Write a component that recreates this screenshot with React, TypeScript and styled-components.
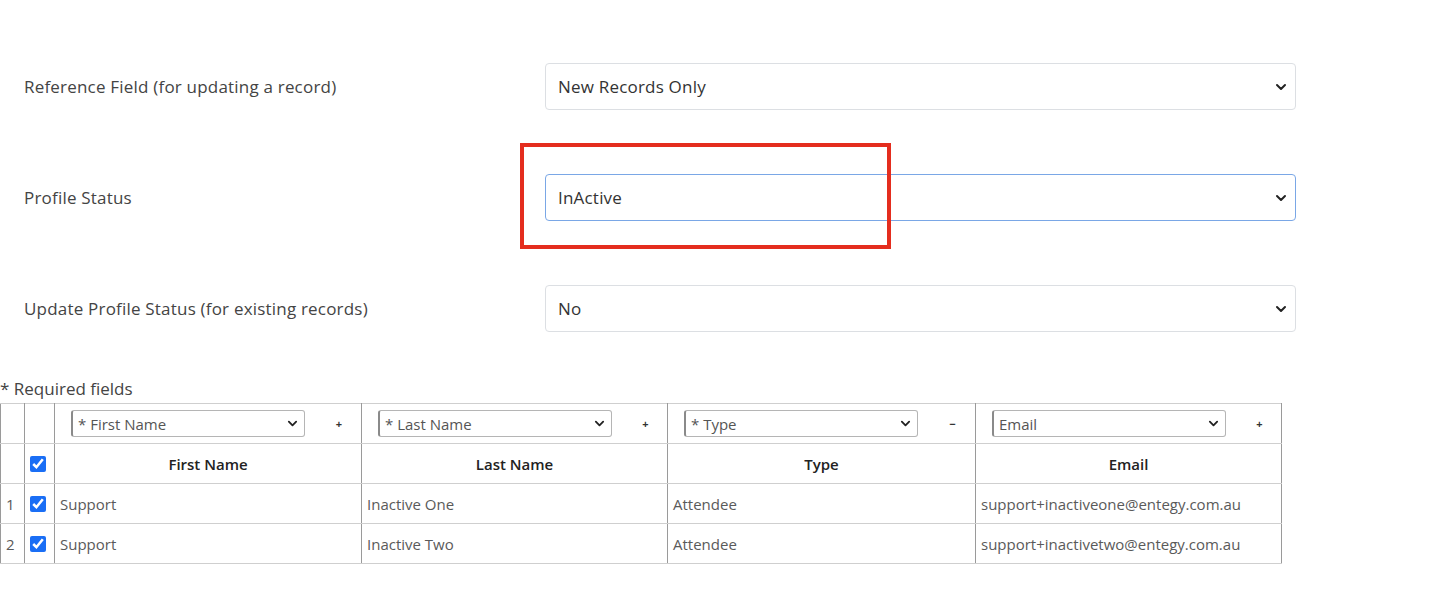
import React from "react";
import styled, { createGlobalStyle } from "styled-components";

const Global = createGlobalStyle`
  html, body { margin: 0; padding: 0; background: #fff; }
  body { font-family: "Open Sans", "Noto Sans", sans-serif; color: #444; }
  * { box-sizing: border-box; }
`;

const Page = styled.div`
  width: 1456px;
  height: 616px;
  padding-top: 63px;
`;

const Form = styled.div`
  display: flex;
  flex-direction: column;
  gap: 64px;
  padding-left: 24px;
  width: 1296px;
`;

const FormRow = styled.div`
  display: grid;
  grid-template-columns: 521px 751px;
  align-items: center;
`;

const Label = styled.div`
  font-size: 17px;
  letter-spacing: 0.2px;
  color: #444;
`;

const SelectWrap = styled.div`
  position: relative;
`;

const Select = styled.div<{ $focused?: boolean }>`
  height: 47px;
  display: flex;
  align-items: center;
  justify-content: space-between;
  padding: 0 8px 0 12px;
  border: 1px solid ${(p) => (p.$focused ? "#7aa7e6" : "#dcdfe3")};
  border-radius: 4px;
  font-size: 17px;
  letter-spacing: 0.2px;
  color: #333;
  background: #fff;
`;

const Highlight = styled.div`
  position: absolute;
  left: -25px;
  top: -31px;
  width: 371px;
  height: 106px;
  border: 4px solid #e42d1e;
  pointer-events: none;
`;

const Chevron = ({ size = 12 }: { size?: number }) => (
  <svg width={size} height={size} viewBox="0 0 12 12" fill="none">
    <path d="M2 4 L6 8 L10 4" stroke="#222" strokeWidth="2" strokeLinecap="round" strokeLinejoin="round" />
  </svg>
);

const Required = styled.div`
  margin-top: 46px;
  font-size: 17px;
  line-height: 22px;
  color: #444;
`;

const Table = styled.table`
  margin-top: 3px;
  border-collapse: collapse;
  width: 1281px;
  table-layout: fixed;
  font-size: 15px;
  color: #5a5a5a;
  border: 1px solid #8c8c8c;
`;

const Cell = styled.td<{ $center?: boolean }>`
  height: 40px;
  border-top: 1px solid #cfcfcf;
  border-bottom: 1px solid #cfcfcf;
  border-left: 1px solid #9a9a9a;
  border-right: 1px solid #9a9a9a;
  padding: 0 5px;
  text-align: ${(p) => (p.$center ? "center" : "left")};
  vertical-align: middle;
  white-space: nowrap;
  overflow: hidden;
`;

const NumCell = styled(Cell)`
  padding: 0 0 0 5px;
`;

const HeadCell = styled(Cell)`
  font-weight: 600;
  color: #222;
  text-align: center;
`;

const PickerCell = styled.div`
  display: flex;
  align-items: center;
  padding-left: 16px;
`;

const Picker = styled.div`
  width: 234px;
  height: 27px;
  display: flex;
  align-items: center;
  justify-content: space-between;
  padding: 0 6px 0 5px;
  border: 1px solid #b5b5b5;
  border-left: 2px solid #8a8a8a;
  border-radius: 3px;
  font-size: 15px;
  color: #555;
`;

const Toggle = styled.span`
  flex: 1;
  padding-left: 12px;
  text-align: center;
  font-size: 11px;
  font-weight: 700;
  color: #333;
`;

const Check = styled.input`
  width: 16px;
  height: 16px;
  margin: 0;
  accent-color: #1a6ef5;
  display: block;
`;

const columns = [
  { picker: "* First Name", title: "First Name", sign: "+" },
  { picker: "* Last Name", title: "Last Name", sign: "+" },
  { picker: "* Type", title: "Type", sign: "−" },
  { picker: "Email", title: "Email", sign: "+" },
];

const rows = [
  ["Support", "Inactive One", "Attendee", "support+inactiveone@entegy.com.au"],
  ["Support", "Inactive Two", "Attendee", "support+inactivetwo@entegy.com.au"],
];

const fields = [
  { label: "Reference Field (for updating a record)", value: "New Records Only" },
  { label: "Profile Status", value: "InActive", focused: true },
  { label: "Update Profile Status (for existing records)", value: "No" },
];

export default function App() {
  return (
    <Page>
      <Global />
      <Form>
        {fields.map((f) => (
          <FormRow key={f.label}>
            <Label>{f.label}</Label>
            <SelectWrap>
              <Select $focused={f.focused}>
                <span>{f.value}</span>
                <Chevron />
              </Select>
              {f.focused && <Highlight />}
            </SelectWrap>
          </FormRow>
        ))}
      </Form>
      <Required>* Required fields</Required>
      <Table>
        <colgroup>
          <col style={{ width: 24 }} />
          <col style={{ width: 30 }} />
          <col style={{ width: 307 }} />
          <col style={{ width: 306 }} />
          <col style={{ width: 308 }} />
          <col style={{ width: 306 }} />
        </colgroup>
        <tbody>
          <tr>
            <Cell />
            <Cell />
            {columns.map((c) => (
              <Cell key={c.picker} style={{ padding: 0 }}>
                <PickerCell>
                  <Picker>
                    <span>{c.picker}</span>
                    <Chevron size={11} />
                  </Picker>
                  <Toggle>{c.sign}</Toggle>
                </PickerCell>
              </Cell>
            ))}
          </tr>
          <tr>
            <Cell />
            <Cell $center>
              <Check type="checkbox" checked readOnly />
            </Cell>
            {columns.map((c) => (
              <HeadCell key={c.title}>{c.title}</HeadCell>
            ))}
          </tr>
          {rows.map((r, i) => (
            <tr key={i}>
              <NumCell>{i + 1}</NumCell>
              <Cell $center>
                <Check type="checkbox" checked readOnly />
              </Cell>
              {r.map((v, j) => (
                <Cell key={j}>{v}</Cell>
              ))}
            </tr>
          ))}
        </tbody>
      </Table>
    </Page>
  );
}
